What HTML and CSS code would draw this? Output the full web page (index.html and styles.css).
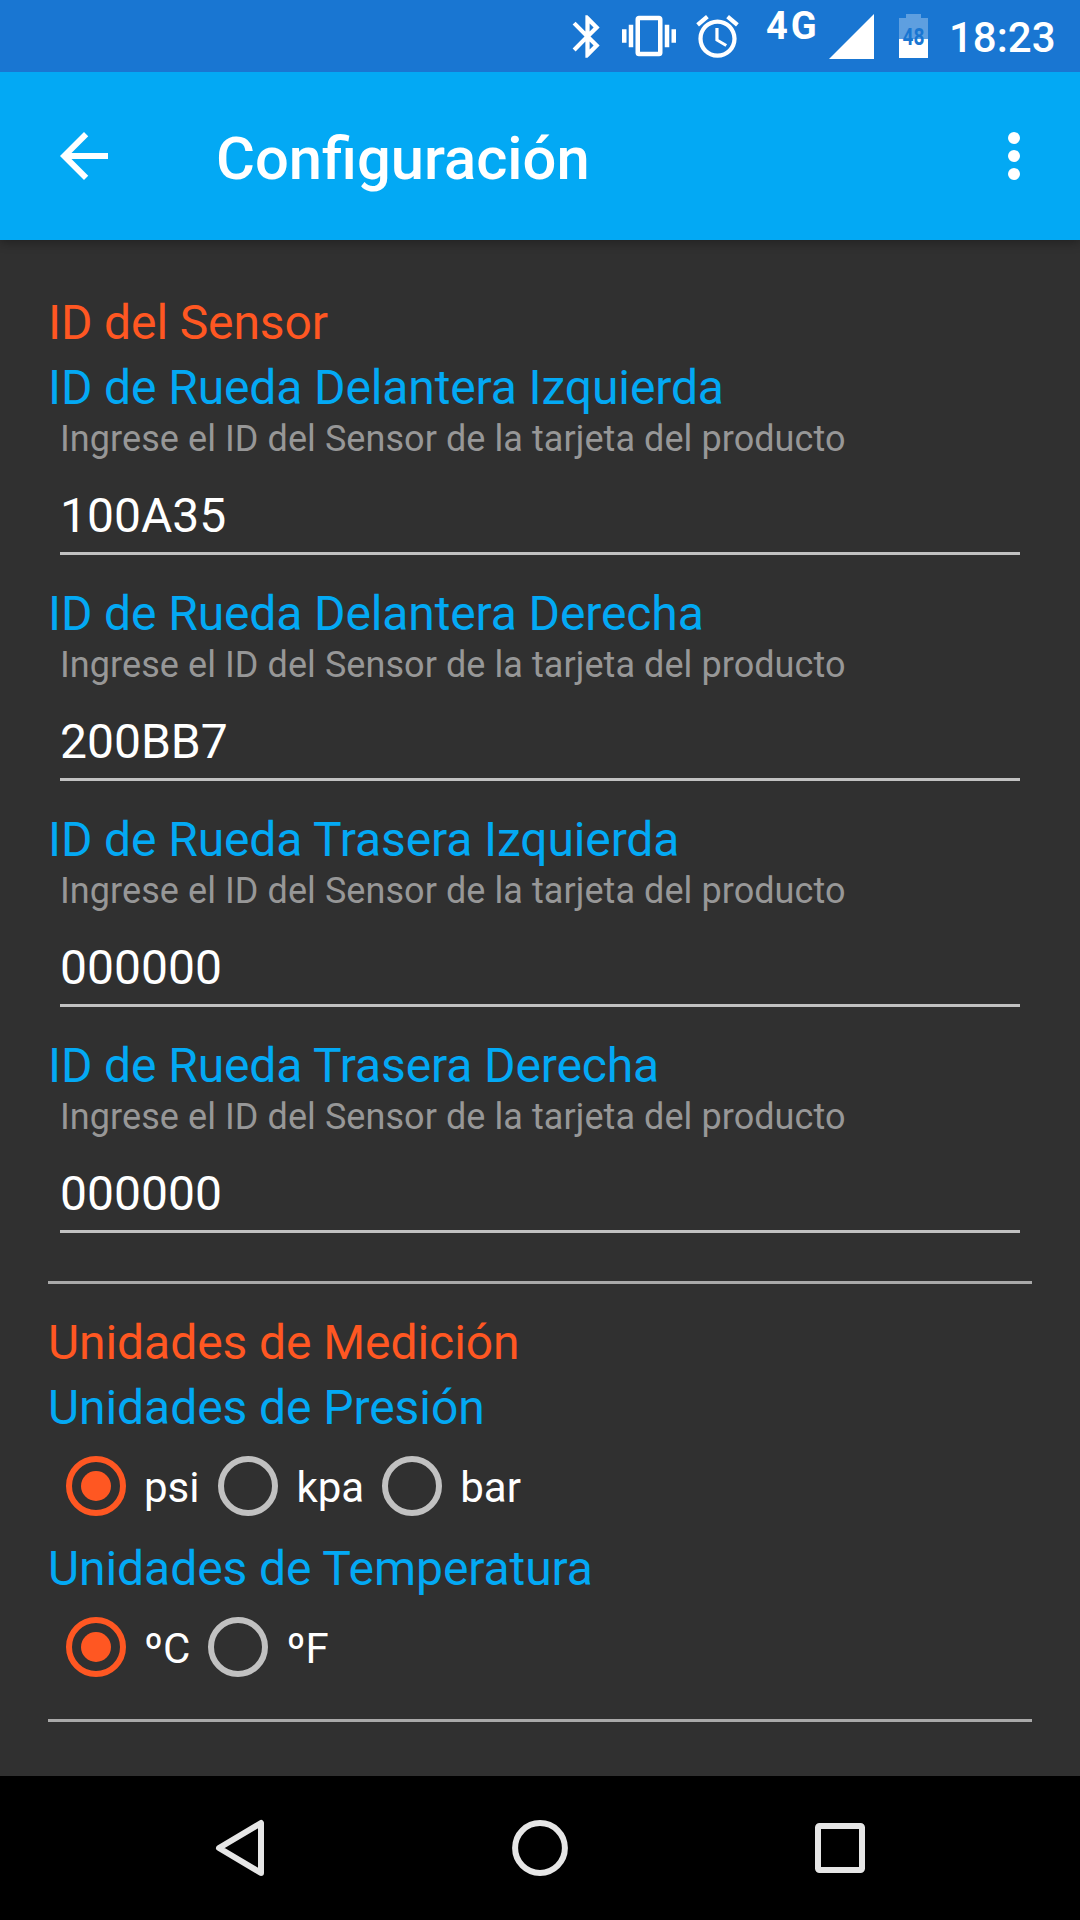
FILE: index.html
```html
<!DOCTYPE html>
<html lang="es">
<head>
<meta charset="utf-8">
<title>Configuración</title>
<link rel="stylesheet" href="styles.css">
</head>
<body>
<div class="screen">
  <div class="status-bar">
    <svg class="bluetooth" viewBox="0 0 24 24"><path d="M17.71 7.71L12 2h-1v7.59L6.41 5 5 6.41 10.59 12 5 17.59 6.41 19 11 14.41V22h1l5.71-5.71-4.3-4.29 4.3-4.29zM13 5.83l1.88 1.88L13 9.59V5.83zm1.88 10.46L13 18.17v-3.76l1.88 1.88z"/></svg>
    <svg class="vibrate" viewBox="0 0 24 24"><path d="M0 15h2V9H0v6zm3 2h2V7H3v10zm19-8v6h2V9h-2zm-3 8h2V7h-2v10zM16.5 3h-9C6.67 3 6 3.67 6 4.5v15c0 .83.67 1.5 1.5 1.5h9c.83 0 1.5-.67 1.5-1.5v-15c0-.83-.67-1.5-1.5-1.5zM16 19H8V5h8v14z"/></svg>
    <svg class="alarm" viewBox="0 0 24 24"><path d="M22 5.72l-4.6-3.86-1.29 1.53 4.6 3.86L22 5.72zM7.88 3.39L6.6 1.86 2 5.71l1.29 1.53 4.59-3.85zM12.5 8H11v6l4.75 2.85.75-1.23-4-2.37V8zM12 4c-4.97 0-9 4.03-9 9s4.02 9 9 9c4.97 0 9-4.03 9-9s-4.03-9-9-9zm0 16c-3.87 0-7-3.13-7-7s3.13-7 7-7 7 3.13 7 7-3.13 7-7 7z"/></svg>
    <span class="network">4G</span>
    <svg class="signal" viewBox="0 0 45 45"><path d="M45 0V45H0z"/></svg>
    <svg class="battery" viewBox="0 0 29 44"><path class="battery-empty" d="M7 0H22V4H29V25H0V4H7z"/><path d="M0 25H29V44H0z"/><text class="battery-level" x="14.5" y="30.5" text-anchor="middle" textLength="22" lengthAdjust="spacingAndGlyphs">48</text></svg>
    <span class="clock">18:23</span>
  </div>

  <header class="app-bar">
    <svg class="back" viewBox="0 0 24 24"><path d="M20 11H7.83l5.59-5.59L12 4l-8 8 8 8 1.41-1.41L7.83 13H20v-2z"/></svg>
    <h1 class="title">Configuración</h1>
    <svg class="more" viewBox="0 0 12 48"><circle cx="6" cy="6" r="6"/><circle cx="6" cy="24" r="6"/><circle cx="6" cy="42" r="6"/></svg>
  </header>

  <main class="content">
    <section class="sensors">
      <h2 class="section-title">ID del Sensor</h2>
      <div class="field">
        <h3 class="label">ID de Rueda Delantera Izquierda</h3>
        <p class="hint">Ingrese el ID del Sensor de la tarjeta del producto</p>
        <div class="value">100A35</div>
      </div>
      <div class="field">
        <h3 class="label">ID de Rueda Delantera Derecha</h3>
        <p class="hint">Ingrese el ID del Sensor de la tarjeta del producto</p>
        <div class="value">200BB7</div>
      </div>
      <div class="field">
        <h3 class="label">ID de Rueda Trasera Izquierda</h3>
        <p class="hint">Ingrese el ID del Sensor de la tarjeta del producto</p>
        <div class="value">000000</div>
      </div>
      <div class="field">
        <h3 class="label">ID de Rueda Trasera Derecha</h3>
        <p class="hint">Ingrese el ID del Sensor de la tarjeta del producto</p>
        <div class="value">000000</div>
      </div>
    </section>
    <section class="units">
      <h2 class="section-title">Unidades de Medición</h2>
      <h3 class="label">Unidades de Presión</h3>
      <div class="radios pressure">
        <span class="radio checked"></span><span class="option">psi</span>
        <span class="radio"></span><span class="option">kpa</span>
        <span class="radio"></span><span class="option">bar</span>
      </div>
      <h3 class="label">Unidades de Temperatura</h3>
      <div class="radios temperature">
        <span class="radio checked"></span><span class="option">ºC</span>
        <span class="radio"></span><span class="option">ºF</span>
      </div>
    </section>
  </main>

  <nav class="nav-bar">
    <svg viewBox="0 0 60 60"><path d="M51 5V55L9 30z"/></svg>
    <svg viewBox="0 0 60 60"><circle cx="30" cy="30" r="24.9"/></svg>
    <svg viewBox="0 0 60 60"><rect x="8" y="8" width="44" height="44" rx="1.5"/></svg>
  </nav>
</div>
</body>
</html>
```

FILE: styles.css
```css
* {
  box-sizing: border-box;
  margin: 0;
}

body {
  font-family: Roboto, sans-serif;
  background: #303030;
}

.screen {
  display: flex;
  flex-direction: column;
  width: 1080px;
  height: 1920px;
  overflow: hidden;
  color: #fff;
  background: #303030;
}

svg {
  display: block;
  flex: none;
  fill: #fff;
}

/* Status bar */
.status-bar {
  position: relative;
  z-index: 1;
  display: flex;
  flex: none;
  align-items: flex-start;
  height: 72px;
  padding-left: 562px;
  background: #1976d2;
}

.bluetooth,
.alarm {
  width: 51px;
  height: 51px;
  margin-top: 11px;
}

.vibrate {
  width: 54px;
  height: 54px;
  margin: 9px 16px 0 9px;
}

.network {
  width: 52px;
  margin: 4px 0 0 23px;
  font-size: 38px;
  line-height: 44px;
  font-weight: 700;
  letter-spacing: 3px;
  white-space: nowrap;
}

.signal {
  width: 45px;
  height: 45px;
  margin: 14px 0 0 11px;
}

.battery {
  width: 29px;
  height: 44px;
  margin: 14px 0 0 25px;
}

.battery-empty {
  fill: #5e9fe0;
}

.battery-level {
  font-size: 23px;
  font-weight: 700;
  fill: #1976d2;
}

.clock {
  margin: 13px 0 0 21px;
  font-size: 42px;
  line-height: 50px;
  font-weight: 500;
}

/* App bar */
.app-bar {
  display: flex;
  flex: none;
  align-items: center;
  height: 168px;
  padding: 0 60px 0 48px;
  background: #03a9f4;
  box-shadow: 0 2px 10px rgba(0, 0, 0, 0.35);
}

.back {
  width: 72px;
  height: 72px;
}

.title {
  flex: 1;
  margin-left: 96px;
  padding-top: 6px;
  font-size: 59.7px;
  line-height: 70px;
  font-weight: 500;
}

.more {
  width: 12px;
  height: 48px;
}

/* Settings */
.content {
  flex: 1;
  padding: 50px 48px 0;
}

.section-title,
.label {
  font-size: 48px;
  line-height: 65px;
  font-weight: 400;
  letter-spacing: -0.12px;
}

.units .section-title,
.units .label {
  letter-spacing: -0.07px;
}

.section-title {
  color: #ff5722;
}

.label {
  color: #03a9f4;
}

.field {
  height: 226px;
}

.hint {
  padding-left: 12px;
  font-size: 36px;
  line-height: 38px;
  letter-spacing: 0.07px;
  color: #979797;
}

.value {
  height: 67px;
  margin: 30px 12px 0;
  border-bottom: 3px solid #c1c1c1;
  font-size: 48px;
  line-height: 56px;
}

.sensors,
.units {
  border-bottom: 3px solid #a9a9a9;
}

.sensors {
  padding-bottom: 22px;
}

.units {
  padding: 26px 0 42px;
}

.radios {
  display: flex;
  height: 60px;
  margin-top: 16px;
  padding-left: 18px;
}

.pressure {
  margin-bottom: 20px;
}

.radio {
  display: grid;
  flex: none;
  place-items: center;
  width: 60px;
  height: 60px;
  border: 6px solid #c1c1c1;
  border-radius: 50%;
}

.checked {
  border-color: #ff5722;
}

.checked::before {
  content: "";
  width: 30px;
  height: 30px;
  border-radius: 50%;
  background: #ff5722;
}

.option {
  margin: 0 18px;
  padding-top: 7px;
  font-size: 42px;
  line-height: 50px;
}

.pressure .checked + .option {
  margin-right: 19px;
}

/* Navigation bar */
.nav-bar {
  display: flex;
  flex: none;
  justify-content: center;
  gap: 240px;
  height: 144px;
  padding-top: 42px;
  background: #000;
}

.nav-bar svg {
  width: 60px;
  height: 60px;
  fill: none;
  stroke: #e6e6e6;
  stroke-width: 6;
  stroke-linejoin: round;
}
```
